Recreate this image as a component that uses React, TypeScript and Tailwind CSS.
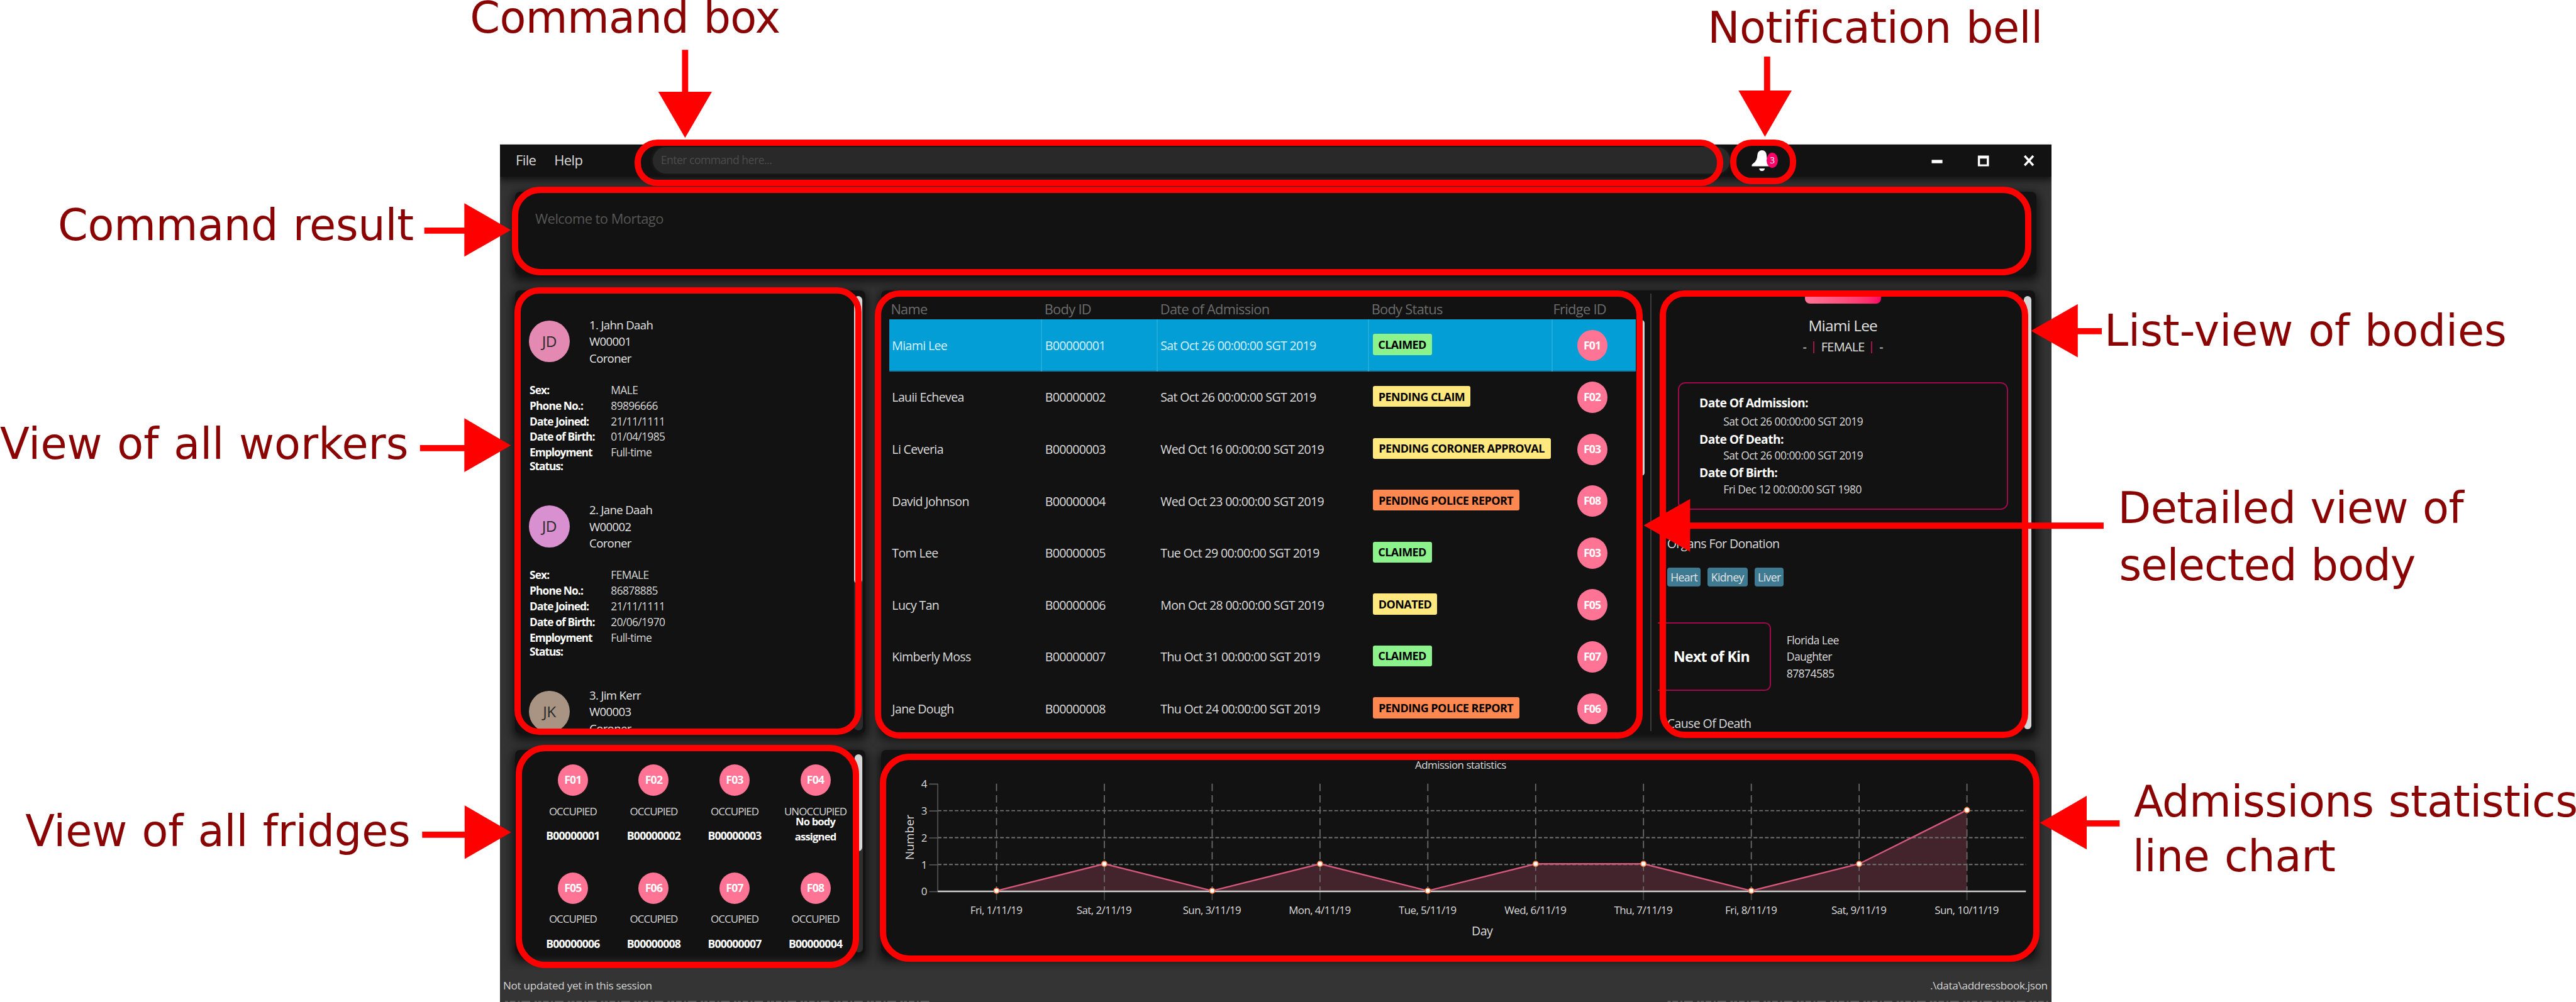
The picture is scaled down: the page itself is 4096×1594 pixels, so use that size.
import React from "react";

type Worker = { no: number; name: string; id: string; initials: string; color: string; sex: string; phone: string; joined: string; birth: string };

const workers: Worker[] = [
  { no: 1, name: "Jahn Daah", id: "W00001", initials: "JD", color: "bg-[#e48ab2]", sex: "MALE", phone: "89896666", joined: "21/11/1111", birth: "01/04/1985" },
  { no: 2, name: "Jane Daah", id: "W00002", initials: "JD", color: "bg-[#d890d0]", sex: "FEMALE", phone: "86878885", joined: "21/11/1111", birth: "20/06/1970" },
];

const CLAIMED = "w-[96px] bg-[#8cf28c]";
const CLAIM = "w-[159px] bg-[#ffe97f]";
const CORONER = "w-[289px] bg-[#ffe97f]";
const POLICE = "w-[238px] bg-[#ff8850]";
const DONATED = "w-[105px] bg-[#ffe97f]";

const bodies = [
  ["Miami Lee", "B00000001", "Sat Oct 26 00:00:00 SGT 2019", "CLAIMED", CLAIMED, "F01"],
  ["Lauii Echevea", "B00000002", "Sat Oct 26 00:00:00 SGT 2019", "PENDING CLAIM", CLAIM, "F02"],
  ["Li Ceveria", "B00000003", "Wed Oct 16 00:00:00 SGT 2019", "PENDING CORONER APPROVAL", CORONER, "F03"],
  ["David Johnson", "B00000004", "Wed Oct 23 00:00:00 SGT 2019", "PENDING POLICE REPORT", POLICE, "F08"],
  ["Tom Lee", "B00000005", "Tue Oct 29 00:00:00 SGT 2019", "CLAIMED", CLAIMED, "F03"],
  ["Lucy Tan", "B00000006", "Mon Oct 28 00:00:00 SGT 2019", "DONATED", DONATED, "F05"],
  ["Kimberly Moss", "B00000007", "Thu Oct 31 00:00:00 SGT 2019", "CLAIMED", CLAIMED, "F07"],
  ["Jane Dough", "B00000008", "Thu Oct 24 00:00:00 SGT 2019", "PENDING POLICE REPORT", POLICE, "F06"],
];

const fridges = [
  ["F01", "B00000001"],
  ["F02", "B00000002"],
  ["F03", "B00000003"],
  ["F04", ""],
  ["F05", "B00000006"],
  ["F06", "B00000008"],
  ["F07", "B00000007"],
  ["F08", "B00000004"],
];

const admissions: [string, number][] = [
  ["Fri, 1/11/19", 0],
  ["Sat, 2/11/19", 1],
  ["Sun, 3/11/19", 0],
  ["Mon, 4/11/19", 1],
  ["Tue, 5/11/19", 0],
  ["Wed, 6/11/19", 1],
  ["Thu, 7/11/19", 1],
  ["Fri, 8/11/19", 0],
  ["Sat, 9/11/19", 1],
  ["Sun, 10/11/19", 3],
];

const PANEL = "relative overflow-hidden rounded-[8px] bg-[#121212]";
const SHADOW = "rounded-[8px] shadow-[0_6px_16px_3px_rgba(0,0,0,0.75)]";
const COLS = "grid grid-cols-[248.5px_187.5px_343px_299px_134px]";

function FridgeDot({ label }: { label: string }) {
  return (
    <div className="flex h-[51px] w-[49px] items-center justify-center rounded-[50%] bg-[#ff7394] text-[18px] font-bold leading-none tracking-[-0.045em] text-white">
      {label}
    </div>
  );
}

function TitleBar() {
  return (
    <div className="relative flex h-[52px] w-full items-center bg-[#121212] shadow-[0_3px_12px_2px_rgba(0,0,0,0.7)]">
      <span className="-mt-[2px] ml-[25.500px] w-[62.500px] text-[22.5px] leading-[28px] tracking-[-0.03em] text-[#dcdcdc]">File</span>
      <span className="-mt-[2px] w-[160px] text-[22.5px] leading-[28px] tracking-[-0.03em] text-[#dcdcdc]">Help</span>
      <div className="-mt-[2px] flex h-[43px] w-[1749px] items-center rounded-full bg-[#292929] pl-[13px] text-[18px] tracking-[-0.03em] text-[#4c4c4c] shadow-[0_0_5px_1px_#1f1f1f]">
        <span>Enter command here...</span>
      </div>
      <div className="relative ml-[35px] h-[34px] w-[44px]">
        <svg className="h-[34px] w-[34px]" viewBox="0 0 34 34">
          <path d="M17 0c-4 0-7 3-7.400 7.500C9 15 7.500 18 .5 23.500V26h33v-2.500C26.500 18 25 15 24.400 7.500 24 3 21 0 17 0Z" fill="#fff" />
          <path d="M12.500 29.500h9a4.500 4.500 0 0 1-9 0Z" fill="#fff" />
        </svg>
        <div className="absolute left-[24.500px] top-[4px] flex h-[25px] w-[19px] items-center justify-center rounded-[50%] bg-[#ff0068] text-[14px] leading-none text-white">
          3
        </div>
      </div>
      <svg className="ml-[247px] h-[20px] w-[170px]" viewBox="0 0 170 20">
        <rect x="1.500" y="8.500" width="17.500" height="5.500" fill="#fff" />
        <path d="M76.500 1.500h18v17.500h-18Zm3.500 4.800v9.600h11V6.300Z" fill="#fff" fillRule="evenodd" />
        <path d="M152.500 2l14 15.500M166.500 2l-14 15.500" stroke="#fff" strokeWidth="3.600" />
      </svg>
    </div>
  );
}

function WorkerHeader({ no, name, id, initials, color }: { no: number; name: string; id: string; initials: string; color: string }) {
  return (
    <div className="flex pl-[23px]">
      <div className={`mt-[6px] flex h-[68px] w-[66px] items-center justify-center rounded-[50%] text-[25px] leading-none tracking-[-0.02em] text-[#2a2a2a] ${color}`}>
        {initials}
      </div>
      <div className="pl-[32px] text-[19px] leading-[27px] tracking-[-0.035em] text-[#e6e6e6]">
        <div>
          {no}. {name}
        </div>
        <div>{id}</div>
        <div>Coroner</div>
      </div>
    </div>
  );
}

function WorkerCard({ w }: { w: Worker }) {
  const rows = [
    ["Sex:", w.sex],
    ["Phone No.:", w.phone],
    ["Date Joined:", w.joined],
    ["Date of Birth:", w.birth],
  ];
  return (
    <div className="h-[300.7px] shrink-0 pt-[42.5px]">
      <WorkerHeader no={w.no} name={w.name} id={w.id} initials={w.initials} color={w.color} />
      <div className="mt-[25px] pl-[24px] text-[17.7px] leading-[25.500px]">
        {rows.map(([k, v]) => (
          <div key={k} className="flex">
            <span className="w-[132px] font-bold tracking-[-0.052em] text-white">{k}</span>
            <span className="tracking-[-0.035em] text-[#d8d8d8]">{v}</span>
          </div>
        ))}
        <div className="mt-[2px] flex leading-[22.300px]">
          <span className="w-[132px] font-bold tracking-[-0.06em] text-white">
            Employment
            <br />
            Status:
          </span>
          <span className="tracking-[-0.035em] text-[#d8d8d8]">Full-time</span>
        </div>
      </div>
    </div>
  );
}

function WorkersPanel() {
  return (
    <div className={`${SHADOW} h-[720px] w-[569px]`}>
      <div className={`${PANEL} h-full w-full`}>
        <div className="flex h-[714px] flex-col overflow-hidden">
          {workers.map((w) => (
            <WorkerCard key={w.no} w={w} />
          ))}
          <div className="pt-[42.5px]">
            <WorkerHeader no={3} name="Jim Kerr" id="W00003" initials="JK" color="bg-[#a99483]" />
          </div>
        </div>
        <div className="absolute left-[551px] top-[9px] h-[706px] w-[14px] rounded-full bg-[#2c2c2c]">
          <div className="h-[468px] w-[13px] rounded-full bg-[#d6d6d6]" />
        </div>
      </div>
    </div>
  );
}

function BodiesTable() {
  return (
    <div className="relative h-full w-[1249px] pl-[13px]">
      <div className={`${COLS} h-[47px] pt-[16px] text-[22.300px] leading-[28px] tracking-[-0.032em] text-[#6c6c6c]`}>
        <span className="pl-[2.500px]">Name</span>
        <span className="pl-[3.500px]">Body ID</span>
        <span className="pl-[4px]">Date of Admission</span>
        <span className="pl-[4px]">Body Status</span>
        <span>Fridge ID</span>
      </div>
      {bodies.map(([name, id, date, status, badge, fridge], i) => {
        const on = i === 0;
        const cell = on ? "flex items-center pl-[4.500px] border-r-[2.1px] border-[#1faadc]" : "flex items-center pl-[4.500px]";
        return (
          <div
            key={id}
            className={`${COLS} h-[84.340px] w-[1212px] text-[20px] tracking-[-0.034em] ${on ? "bg-[#039ed6] text-[#d9f1fb] shadow-[inset_0_-2px_0_#0b84b4]" : "text-[#dcdcdc]"}`}
          >
            <div className={cell}>{name}</div>
            <div className={cell}>{id}</div>
            <div className={cell}>{date}</div>
            <div className={cell}>
              <span className={`-mt-[3px] ml-[1.500px] flex h-[34px] items-center justify-center whitespace-nowrap rounded-[3px] text-[18.400px] font-bold leading-none tracking-[-0.03em] text-black ${badge}`}>
                {status}
              </span>
            </div>
            <div className="flex items-center pl-[39px]">
              <FridgeDot label={fridge} />
            </div>
          </div>
        );
      })}
      <div className="absolute left-[1229px] top-[48px] h-[253px] w-[11px] rounded-full bg-[#d0d0d0]" />
    </div>
  );
}

function BodyDetail() {
  const dates = [
    ["Date Of Admission:", "Sat Oct 26 00:00:00 SGT 2019", "mt-[16.600px]", "mt-[4.600px]"],
    ["Date Of Death:", "Sat Oct 26 00:00:00 SGT 2019", "mt-[4.100px]", "mt-0"],
    ["Date Of Birth:", "Fri Dec 12 00:00:00 SGT 1980", "mt-[2.300px]", "mt-[2.200px]"],
  ];
  return (
    <div className="relative flex h-full w-[625px] flex-col">
      <div className="ml-[251px] h-[21.700px] w-[124px] shrink-0 rounded-b-[8px] bg-linear-to-r from-[#ff7394] to-[#ff0066]" />
      <div className="mt-[20.300px] text-center text-[25px] leading-[30px] tracking-[-0.035em] text-[#e0e0e0]">Miami Lee</div>
      <div className="mt-[8px] flex h-[24px] items-center justify-center gap-[11px] text-[20.300px] leading-[24px] tracking-[-0.035em] text-[#e0e0e0]">
        <span>-</span>
        <span className="h-[19px] w-[2px] bg-[#a3154b]" />
        <span>FEMALE</span>
        <span className="h-[19px] w-[2px] bg-[#a3154b]" />
        <span>-</span>
      </div>
      <div className="ml-[45px] mt-[44.800px] h-[207.700px] w-[536px] shrink-0 rounded-[12px] border-[2.1px] border-[#a00a4a] pl-[32.500px] pt-[2px]">
        {dates.map(([k, v, a, b]) => (
          <div key={k}>
            <div className={`${a} text-[19.700px] font-bold leading-[26px] tracking-[-0.032em] text-white`}>{k}</div>
            <div className={`${b} pl-[39px] text-[17.800px] leading-[25px] tracking-[-0.030em] text-[#d8d8d8]`}>{v}</div>
          </div>
        ))}
      </div>
      <div className="ml-[27px] mt-[42px] text-[20px] leading-[26px] tracking-[-0.032em] text-[#dcdcdc]">Organs For Donation</div>
      <div className="ml-[27.600px] mt-[25.500px] flex text-[18px] leading-[31px] tracking-[-0.035em] text-[#e4e4e4]">
        <span className="mr-[11px] w-[54px] rounded-[4px] bg-[#3e7b92] text-center">Heart</span>
        <span className="mr-[12px] w-[65px] rounded-[4px] bg-[#3e7b92] text-center">Kidney</span>
        <span className="w-[47px] rounded-[4px] bg-[#3e7b92] text-center">Liver</span>
      </div>
      <div className="mt-[58px] flex items-center">
        <div className="ml-[12px] flex h-[111.600px] w-[183.600px] items-center rounded-r-[10px] border-y-[2.1px] border-r-[2.1px] border-[#a00a4a] pl-[25.500px] text-[23.500px] font-bold tracking-[-0.028em] text-white">
          Next of Kin
        </div>
        <div className="pl-[25.500px] text-[18px] leading-[27px] tracking-[-0.035em] text-[#dcdcdc]">
          <div>Florida Lee</div>
          <div>Daughter</div>
          <div>87874585</div>
        </div>
      </div>
      <div className="ml-[27px] mt-[40px] text-[20px] leading-[26px] tracking-[-0.032em] text-[#dcdcdc]">Cause Of Death</div>
      <div className="absolute left-[606px] top-[9px] h-[704px] w-[13px] rounded-full bg-[#d6d6d6]" />
    </div>
  );
}

function FridgesPanel() {
  return (
    <div className={`${SHADOW} h-[333px] w-[569px]`}>
      <div className={`${PANEL} h-full w-full`}>
        <div className="grid grid-cols-[repeat(4,131.300px)] pl-[28.600px] pt-[23.500px]">
          {fridges.map(([id, body]) => (
            <div key={id} className="flex h-[175.300px] flex-col items-center">
              <FridgeDot label={id} />
              <div className="mt-[14.800px] text-[17.300px] leading-[20px] tracking-[-0.055em] text-[#d8d8d8]">{body ? "OCCUPIED" : "UNOCCUPIED"}</div>
              {body ? (
                <div className="mt-[17.500px] text-[18px] font-bold leading-[25px] tracking-[-0.045em] text-white">{body}</div>
              ) : (
                <div className="-mt-[5.700px] text-center text-[17px] font-bold leading-[25px] tracking-[-0.05em] text-white">
                  No body
                  <br />
                  assigned
                </div>
              )}
            </div>
          ))}
        </div>
        <div className="absolute left-[552px] top-[7px] h-[322px] w-[13px] rounded-full bg-[#2f2f2f]">
          <div className="h-[157px] w-[12px] rounded-full bg-[#d6d6d6]" />
        </div>
      </div>
    </div>
  );
}

function AdmissionsChart() {
  const x = (i: number) => 187.4 + i * 175.1;
  const y = (v: number) => 228.8 - v * 43.7;
  const line = admissions.map(([, v], i) => `${x(i)},${y(v)}`).join(" ");
  return (
    <div className={`${SHADOW} h-[333px] w-[1874px]`}>
      <div className={`${PANEL} h-full w-full`}>
        <svg className="h-[333px] w-[1874px]" viewBox="0 0 1874 333" fontFamily="'Open Sans', sans-serif" fontSize="17.300">
          <text x="941" y="30.500" textAnchor="middle" fill="#dcdcdc" letterSpacing="-0.500">
            Admission statistics
          </text>
          <polygon points={`${x(0)},${y(0)} ${line} ${x(9)},${y(0)}`} fill="#43242d" />
          {[1, 2, 3].map((v) => (
            <line key={v} x1="92" x2="1859" y1={y(v) + 1} y2={y(v) + 1} stroke="#727272" strokeWidth="2" strokeDasharray="6 3.200" />
          ))}
          {admissions.map(([d], i) => (
            <g key={d}>
              <line x1={x(i)} x2={x(i)} y1="55" y2="228" stroke="#6c6c6c" strokeWidth="1.800" strokeDasharray="12 6.500" />
              <line x1={x(i)} x2={x(i)} y1="229" y2="244" stroke="#454545" strokeWidth="1.800" />
              <text x={x(i) - 0.5} y="266.500" textAnchor="middle" fill="#dcdcdc" letterSpacing="-0.600">
                {d}
              </text>
            </g>
          ))}
          <line x1="92" x2="92" y1="55" y2="231" stroke="#5a5a5a" strokeWidth="1.600" />
          {[0, 1, 2, 3, 4].map((v) => (
            <g key={v}>
              <line x1="78" x2="92" y1={y(v) + 1.5} y2={y(v) + 1.5} stroke="#5a5a5a" strokeWidth="1.600" />
              <text x="75" y={y(v) + 7.5} textAnchor="end" fill="#dcdcdc">
                {v}
              </text>
            </g>
          ))}
          <line x1="92" x2="1859" y1="229.800" y2="229.800" stroke="#d0d0d0" strokeWidth="2.600" />
          <polyline points={line} fill="none" stroke="#d5597c" strokeWidth="2.400" />
          {admissions.map(([d, v], i) => (
            <circle key={d} cx={x(i)} cy={y(v)} r="4.200" fill="#fff" stroke="#ff7a3c" strokeWidth="1.600" />
          ))}
          <text x="976" y="301.500" textAnchor="middle" fill="#dcdcdc" fontSize="20" letterSpacing="-0.600">
            Day
          </text>
          <text transform="translate(53 142) rotate(-90)" textAnchor="middle" fill="#dcdcdc" fontSize="19">
            Number
          </text>
        </svg>
      </div>
    </div>
  );
}

function AppWindow() {
  return (
    <div className="flex h-[1394px] w-[2519px] flex-col overflow-hidden border-t border-[#cfd4d0] bg-[#333333]">
      <TitleBar />
      <div className={`${SHADOW} ml-[24px] mt-[24px] h-[135px] w-[2470.500px] shrink-0`}>
        <div className={`${PANEL} h-full w-full pl-[33px] pt-[30px] text-[22.400px] leading-[28px] tracking-[-0.025em] text-[#565656]`}>Welcome to Mortago</div>
      </div>
      <div className="ml-[24px] mt-[26px] flex shrink-0 gap-[26px]">
        <WorkersPanel />
        <div className={`${SHADOW} h-[720px] w-[1874px]`}>
          <div className={`${PANEL} flex h-full w-full`}>
            <BodiesTable />
            <div className="-mr-[2px] mt-[5px] h-[711px] w-[2px] bg-[#3c3c3c]" />
            <BodyDetail />
          </div>
        </div>
      </div>
      <div className="ml-[24px] mt-[26.500px] flex shrink-0 gap-[26px]">
        <FridgesPanel />
        <AdmissionsChart />
      </div>
      <div className="mt-[24px] flex h-[49px] shrink-0 items-center justify-between bg-[#343434] pl-[5px] pr-[6px] pt-[2px] text-[17.500px] tracking-[-0.018em] text-[#d4d4d4]">
        <span>Not updated yet in this session</span>
        <span>.\data\addressbook.json</span>
      </div>
      <svg className="h-[3px] w-full shrink-0" viewBox="0 0 2519 3">
        <path d="M8 2H704M1896 2H2516" stroke="#686868" strokeWidth="1.400" strokeDasharray="5 3 9 4 3 3 14 7 4 2" />
      </svg>
    </div>
  );
}

const LABEL = "absolute whitespace-pre text-[70px] leading-[84px] text-[#8b0404] font-['DejaVu_Sans',sans-serif] [font-variant-ligatures:none] [word-spacing:2px]";
const RING = "absolute border-[10.3px] border-[#ff0000]";

function Annotations() {
  return (
    <>
      <div className={`${RING} left-[1030px] top-[227px] h-[75px] w-[1768px] rounded-[37px]`} />
      <div className={`${RING} left-[2809px] top-[227px] h-[72.500px] w-[108px] rounded-[35px]`} />
      <div className={`${RING} left-[831.700px] top-[303.300px] h-[144px] w-[2467px] rounded-[46px]`} />
      <div className={`${RING} left-[835px] top-[467px] h-[727px] w-[564.500px] rounded-[40px]`} />
      <div className={`${RING} left-[1421px] top-[471.700px] h-[728px] w-[1246.500px] rounded-[40px]`} />
      <div className={`${RING} left-[2695px] top-[472.300px] h-[726.500px] w-[599px] rounded-[40px]`} />
      <div className={`${RING} left-[837px] top-[1210.500px] h-[362.500px] w-[558px] rounded-[48px]`} />
      <div className={`${RING} left-[1429px] top-[1224px] h-[339px] w-[1883px] rounded-[48px]`} />
      <svg className="absolute left-0 top-0 h-[1628px] w-[4183px]" viewBox="0 0 4183 1628" fill="#ff0000">
        <path d="M1107.500 81h10v68h38.500L1112.500 224 1069 149h38.500Z" />
        <path d="M2864.500 92h10v55h35L2866 222 2823 147h41.500Z" />
        <path d="M689 369.700h65V330l75.500 43.700L754 417v-37.300h-65Z" />
        <path d="M682 723h72v-43.500l75.500 44L754 767v-34h-72Z" />
        <path d="M685.500 1351h69v-42.500l75.500 43.700-75.500 43.400V1361h-69Z" />
        <path d="M3413 533v10h-39v37.500l-76-43 76-43.500V533Z" />
        <path d="M3416 849v10h-671.500v37.500L2669 853.500l75.500-43V849Z" />
        <path d="M3442 1332.800v10h-53.500v37.200l-76-43.200 76-43.800v39.800Z" />
      </svg>
      <div className={`${LABEL} left-[763px] top-[-13.700px] tracking-[-0.6px]`}>Command box</div>
      <div className={`${LABEL} left-[2773px] top-[2.800px] tracking-[-0.5px]`}>Notification bell</div>
      <div className={`${LABEL} left-[94px] top-[323.800px] tracking-[-0.3px]`}>Command result</div>
      <div className={`${LABEL} left-0 top-[678.800px]`}>View of all workers</div>
      <div className={`${LABEL} left-[41px] top-[1308.300px] tracking-[-0.2px]`}>View of all fridges</div>
      <div className={`${LABEL} left-[3417px] top-[494.800px]`}>List-view of bodies</div>
      <div className={`${LABEL} left-[3439px] top-[782.800px] tracking-[-0.6px]`}>Detailed view of</div>
      <div className={`${LABEL} left-[3441px] top-[876.400px] tracking-[-0.9px]`}>selected body</div>
      <div className={`${LABEL} left-[3465px] top-[1259.800px] tracking-[-0.5px]`}>Admissions statistics</div>
      <div className={`${LABEL} left-[3463px] top-[1348.800px] tracking-[-0.3px]`}>line chart</div>
    </>
  );
}

export default function App() {
  return (
    <div className="h-[1594px] w-[4096px] overflow-hidden bg-white">
      <div className="relative h-[1628px] w-[4183px] pl-[812px] pt-[234px] font-['Open_Sans',sans-serif] [zoom:0.9792]">
        <AppWindow />
        <Annotations />
      </div>
    </div>
  );
}
